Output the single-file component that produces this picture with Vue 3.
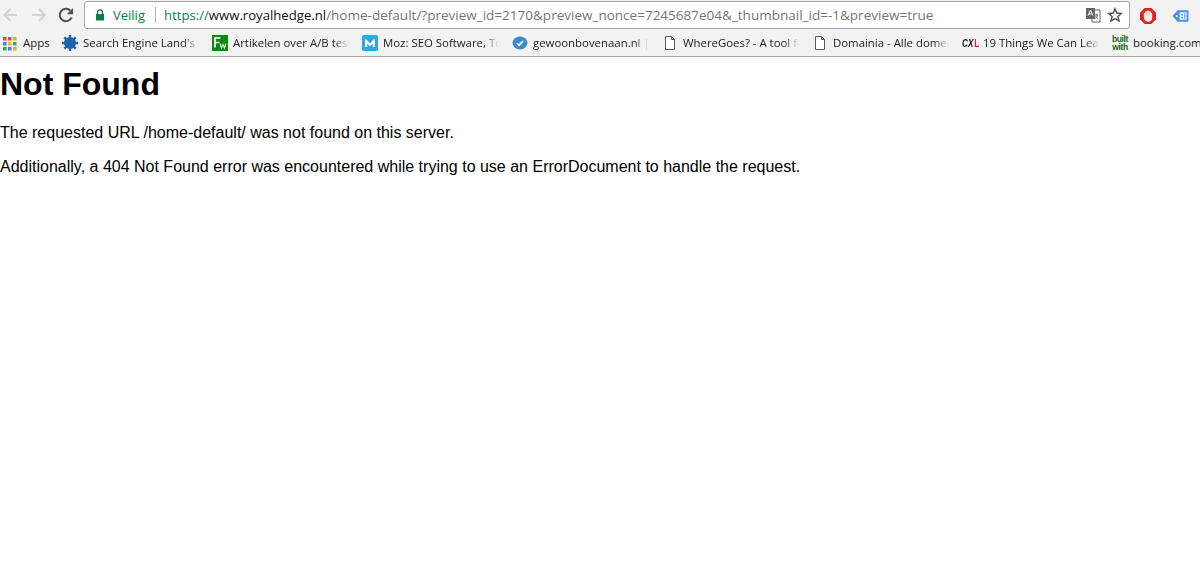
<script setup>
const bookmarks = [
  { label: "Apps", icon: "apps", width: 59, text: 28 },
  { label: "Search Engine Land's Guide", icon: "gear", width: 150, text: 116 },
  { label: "Artikelen over A/B testen", icon: "fw", width: 150, text: 116 },
  { label: "Moz: SEO Software, Tools", icon: "moz", width: 150, text: 116 },
  { label: "gewoonbovenaan.nl | SEO", icon: "check", width: 150, text: 116 },
  { label: "WhereGoes? - A tool for", icon: "doc", width: 150, text: 116 },
  { label: "Domainia - Alle domeinen", icon: "doc", width: 150, text: 116 },
  { label: "19 Things We Can Learn", icon: "cxl", width: 150, text: 117 },
  { label: "booking.com", icon: "built", width: 90, text: 70 },
];
</script>

<template>
  <div class="page">
    <header class="chrome">
      <div class="toolbar">
        <svg class="nav" viewBox="0 0 16 16" fill="none" stroke="#d3d3d3" stroke-width="2">
          <path d="M14 8H1.500M7.500 2l-6 6 6 6" />
        </svg>
        <svg class="nav" viewBox="0 0 16 16" fill="none" stroke="#d3d3d3" stroke-width="2">
          <path d="M1 8h13M8 2l6 6-6 6" />
        </svg>
        <svg class="nav reload" viewBox="0 0 16 16" fill="none">
          <path d="M13.700 10.400A6.200 6.200 0 1 1 12.400 3.700" stroke="#505050" stroke-width="2" />
          <path d="M15 1v6.200H8.800Z" fill="#505050" />
        </svg>
        <div class="omnibox">
          <svg class="lock" viewBox="0 0 10 12">
            <path d="M2.500 5V3.400a2.500 2.500 0 0 1 5 0V5" fill="none" stroke="#0b8043" stroke-width="1.400" />
            <rect x="1" y="5" width="8" height="6.500" fill="#0b8043" />
          </svg>
          <span class="secure">Veilig</span>
          <span class="divider"></span>
          <span class="url"><span class="origin"><span class="scheme">https://</span><span class="host">www.royalhedge.nl</span></span>/home-default/?preview_id=2170&amp;preview_nonce=7245687e04&amp;_thumbnail_id=-1&amp;preview=true</span>
          <svg class="translate" viewBox="0 0 16 16">
            <path d="M7 3h8v12H7z" fill="#fff" stroke="#666" />
            <path d="M1 1h9v11H1z" fill="#666" />
            <path d="M3 8.500 5.500 3 8 8.500M4 7h3" fill="none" stroke="#fff" stroke-width="1" />
            <path d="M10 8h3M11.500 7v1M12.500 8c-.4 2-1.500 3-2.500 3.500M10.700 9.500c.5 1 1.200 1.500 2.300 2" fill="none" stroke="#555" stroke-width=".9" />
          </svg>
          <svg class="star" viewBox="0 0 16 16">
            <path d="m8 1.800 1.800 4.300 4.600.4-3.500 3 1.100 4.500L8 11.600l-4 2.400 1.100-4.500-3.500-3 4.600-.4Z" fill="none" stroke="#555" stroke-width="1.500" />
          </svg>
        </div>
        <div class="extensions">
          <svg class="ext-opera" viewBox="0 0 16 16">
            <path d="M4.700 0h6.600L16 4.700v6.600L11.300 16H4.700L0 11.300V4.700Z" fill="#e0211c" />
            <path d="M3.800 8V5h1.200V3.500h1V2.800h4v.7h1V5h1.200v5c0 2.200-1.400 3.700-4.200 3.700S3.800 12 3.800 8Z" fill="#fbeeec" />
            <path d="M6.500 3.500V7M8 3v4M9.500 3.500V7" stroke="#eba9a4" stroke-width=".6" />
          </svg>
          <svg class="ext-tag" viewBox="0 0 18 14">
            <path d="M6 1h10.500a1 1 0 0 1 1 1v10a1 1 0 0 1-1 1H6L.5 7Z" fill="#4a8fe8" />
            <rect x="8" y="3" width="7.500" height="8" fill="#e3eefb" />
            <path d="M10 5h1.500v1.500H10zM10 8h1.500v1.500H10zM13 4h1v6h-1z" fill="#4a8fe8" />
            <circle cx="5" cy="7" r="1" fill="#fff" />
          </svg>
        </div>
      </div>
      <nav class="bookmarks">
        <div v-for="item in bookmarks" :key="item.label" class="bookmark" :style="{ width: item.width + 'px' }">
          <svg v-if="item.icon === 'apps'" class="icon apps" viewBox="0 0 15 15">
            <rect x="0" y="1" width="3.500" height="3.500" fill="#e3453a" />
            <rect x="5" y="1" width="3.500" height="3.500" fill="#e3453a" />
            <rect x="10" y="1" width="3.500" height="3.500" fill="#e8a33c" />
            <rect x="0" y="6" width="3.500" height="3.500" fill="#3f84e5" />
            <rect x="5" y="6" width="3.500" height="3.500" fill="#e8b93c" />
            <rect x="10" y="6" width="3.500" height="3.500" fill="#3aa757" />
            <rect x="0" y="11" width="3.500" height="3.500" fill="#3aa757" />
            <rect x="5" y="11" width="3.500" height="3.500" fill="#3f84e5" />
            <rect x="10" y="11" width="3.500" height="3.500" fill="#e8a33c" />
          </svg>
          <svg v-else-if="item.icon === 'gear'" class="icon" viewBox="0 0 16 16">
            <circle cx="8" cy="8" r="6" fill="#1c64ae" />
            <path d="M8 0v16M0 8h16M2.300 2.300l11.400 11.400M13.700 2.300 2.300 13.700" stroke="#1c64ae" stroke-width="2.400" />
          </svg>
          <svg v-else-if="item.icon === 'fw'" class="icon" viewBox="0 0 16 16">
            <rect width="16" height="16" fill="#0a8a0a" />
            <path d="M2 3h6.500M3 3v9.500M3 7.500h4.500" fill="none" stroke="#fff" stroke-width="1.700" />
            <path d="M8 8.500l1.500 4.500 1.500-3.500 1.500 3.500L14 8.500" fill="none" stroke="#dff0df" stroke-width="1.100" />
          </svg>
          <svg v-else-if="item.icon === 'moz'" class="icon" viewBox="0 0 16 16">
            <rect width="16" height="16" rx="2" fill="#29a9e6" />
            <path d="M3 12V4.500h1.500L8 8.500l3.500-4H13V12h-2.300V8.500L8 11.300 5.300 8.500V12Z" fill="#fff" />
          </svg>
          <svg v-else-if="item.icon === 'check'" class="icon" viewBox="0 0 16 16">
            <ellipse cx="8" cy="8" rx="7.500" ry="6.500" fill="#3b8ad3" />
            <path d="m4.800 8 2.300 2.200 4-4.200" fill="none" stroke="#fff" stroke-width="1.700" />
          </svg>
          <svg v-else-if="item.icon === 'doc'" class="icon" viewBox="0 0 16 16">
            <path d="M3.500 1.500h6l3 3v10h-9ZM9.500 1.500v3h3" fill="#fff" stroke="#5a5a5a" stroke-width="1" />
          </svg>
          <span v-else-if="item.icon === 'cxl'" class="cxl">CX<b>L</b></span>
          <span v-else class="built">built<br />with</span>
          <span class="label" :style="{ width: item.text + 'px' }" :class="{ plain: item.icon === 'apps' || item.icon === 'built' }">{{ item.label }}</span>
        </div>
      </nav>
    </header>
    <main class="content">
      <h1>Not Found</h1>
      <p>The requested URL /home-default/ was not found on this server.</p>
      <p>Additionally, a 404 Not Found error was encountered while trying to use an ErrorDocument to handle the request.</p>
    </main>
  </div>
</template>

<style>
html,
body {
  margin: 0;
  background: #fff;
  overflow: hidden;
}
</style>

<style scoped>
.page {
  width: 1200px;
  height: 561px;
  background: #fff;
  overflow: hidden;
}
.chrome {
  height: 57px;
  box-sizing: border-box;
  background: #f2f2f2;
  border-bottom: 1px solid #a8a8a8;
}
.toolbar {
  height: 30px;
  display: flex;
  align-items: center;
  padding: 0 0 0 3px;
  box-sizing: border-box;
}
.nav {
  width: 16px;
  height: 16px;
  margin-right: 12px;
  flex: none;
}
.reload {
  margin-left: -1px;
  margin-right: 10px;
}
.omnibox {
  width: 1046px;
  height: 28px;
  box-sizing: border-box;
  background: #fff;
  border: 1px solid #a9a9a9;
  border-radius: 3px;
  display: flex;
  align-items: center;
  padding-left: 10px;
  font-family: "Open Sans", sans-serif;
  font-size: 13px;
  flex: none;
}
.lock {
  width: 10px;
  height: 12px;
  flex: none;
}
.secure {
  color: #0b8043;
  margin-left: 8px;
  width: 34px;
}
.divider {
  width: 1px;
  height: 16px;
  background: #b5b5b5;
  margin: 0 8px;
}
.url {
  color: #767676;
  white-space: nowrap;
  flex: 1;
  font-size: 13.530px;
}
.origin {
  font-size: 13.150px;
}
.scheme {
  color: #0b8043;
}
.host {
  color: #111;
}
.translate {
  width: 16px;
  height: 16px;
  margin-right: 6px;
  flex: none;
}
.star {
  width: 16px;
  height: 16px;
  margin-right: 6px;
  flex: none;
}
.extensions {
  display: flex;
  align-items: center;
  margin-left: 10px;
}
.ext-opera {
  width: 16px;
  height: 16px;
  margin-top: 1px;
}
.ext-tag {
  width: 17px;
  height: 14px;
  margin-left: 16px;
  margin-top: 1px;
}
.bookmarks {
  height: 26px;
  display: flex;
  align-items: center;
  padding-left: 3px;
  font-family: "Open Sans", sans-serif;
  font-size: 11.400px;
  color: #222;
  white-space: nowrap;
}
.bookmark {
  display: flex;
  align-items: center;
  flex: none;
}
.icon {
  width: 16px;
  height: 16px;
  flex: none;
  margin-right: 5px;
}
.icon.apps {
  width: 15px;
  height: 15px;
}
.label {
  overflow: hidden;
  margin-bottom: 2px;
  -webkit-mask-image: linear-gradient(to right, #000 87%, transparent 100%);
  mask-image: linear-gradient(to right, #000 87%, transparent 100%);
}
.label.plain {
  -webkit-mask-image: none;
  mask-image: none;
}
.cxl {
  display: block;
  width: 16px;
  margin-right: 5px;
  font-family: "Liberation Sans", sans-serif;
  font-size: 10.500px;
  font-weight: 700;
  font-style: italic;
  color: #111;
  transform: scaleX(0.78);
  transform-origin: left center;
  flex: none;
}
.cxl b {
  color: #e0211c;
  font-style: normal;
  margin-left: 1px;
}
.built {
  width: 16px;
  margin-right: 5px;
  font-family: "Liberation Sans", sans-serif;
  font-size: 8.500px;
  font-weight: 700;
  line-height: 8px;
  letter-spacing: -0.400px;
  color: #14661f;
  text-align: center;
  flex: none;
}
.content {
  font-family: "Liberation Sans", Arial, sans-serif;
  color: #000;
  font-size: 16px;
}
h1 {
  font-size: 32px;
  font-weight: 700;
  margin: 9px 0 21.440px;
}
p {
  margin: 16px 0;
}
</style>
